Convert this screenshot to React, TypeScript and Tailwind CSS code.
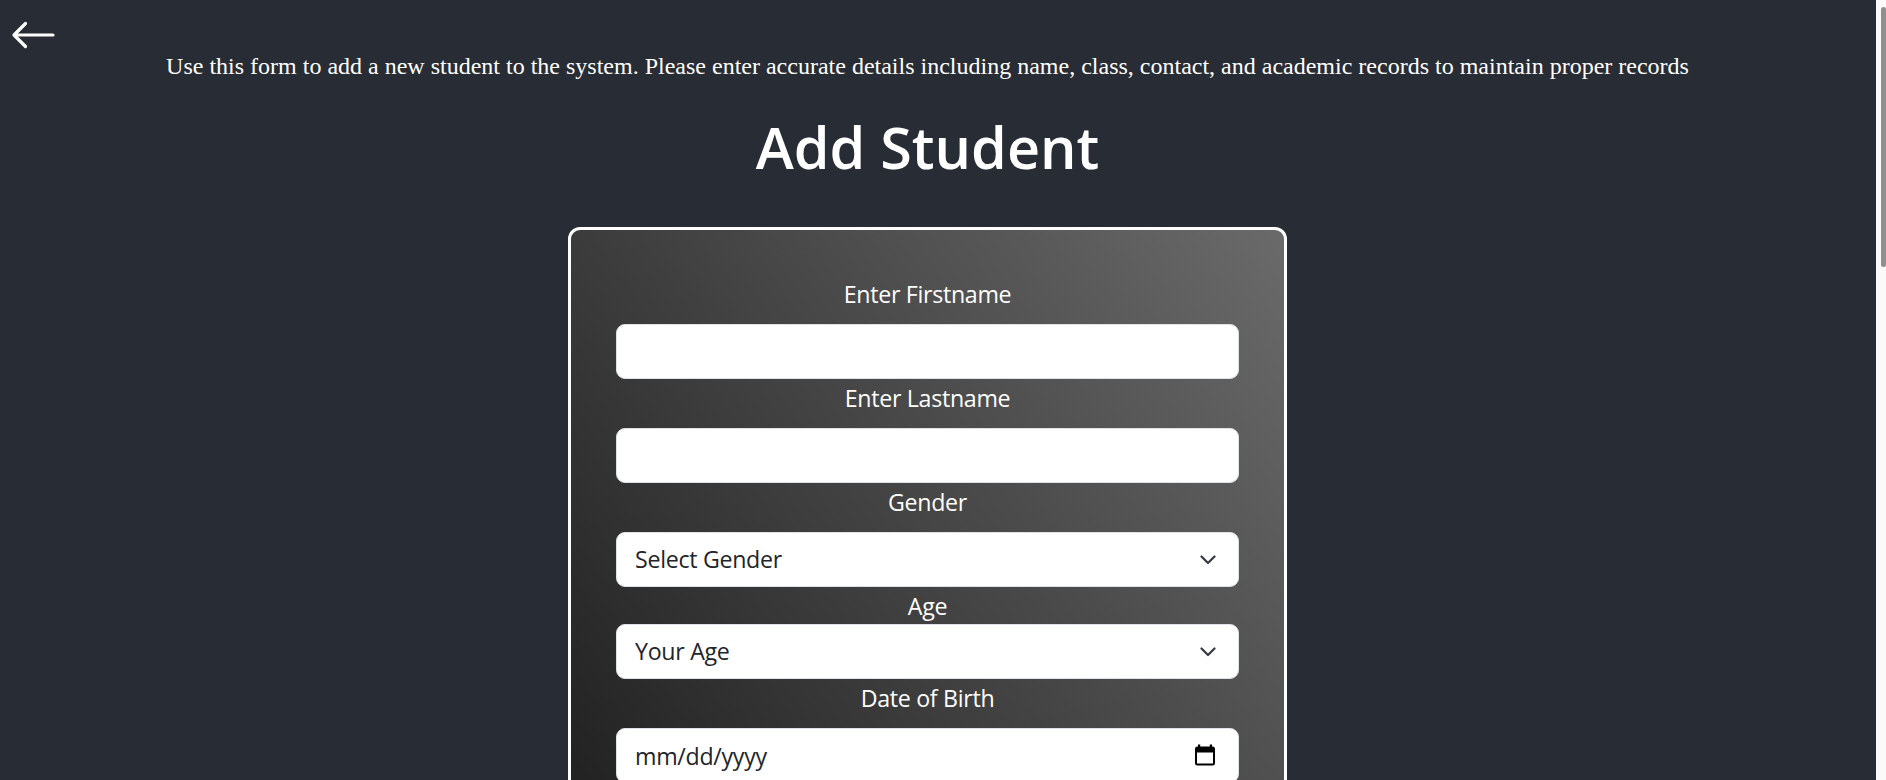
function BackArrow() {
  return (
    <svg width="48" height="48" viewBox="0 0 48 48" fill="none">
      <path
        d="M44 24H5M16.5 12.5 5 24l11.5 11.5"
        stroke="#ffffff"
        strokeWidth="3.2"
        strokeLinecap="round"
        strokeLinejoin="round"
      />
    </svg>
  );
}

function Chevron() {
  return (
    <svg
      className="pointer-events-none absolute right-[23px] top-1/2 -translate-y-1/2"
      width="16"
      height="10"
      viewBox="0 0 16 10"
      fill="none"
    >
      <path d="M1.5 1.5 8 8l6.5-6.5" stroke="#343a40" strokeWidth="2.2" strokeLinecap="round" strokeLinejoin="round" />
    </svg>
  );
}

function CalendarIcon() {
  return (
    <svg
      className="pointer-events-none absolute right-[24px] top-[16px]"
      width="20"
      height="22"
      viewBox="0 0 20 22"
      fill="none"
    >
      <rect x="3" y="0.5" width="2.2" height="4" fill="#000" />
      <rect x="14.8" y="0.5" width="2.2" height="4" fill="#000" />
      <rect x="1" y="3.5" width="18" height="17" rx="1.5" stroke="#000" strokeWidth="2" />
      <rect x="1" y="3.5" width="18" height="5" fill="#000" />
    </svg>
  );
}

const labelCls =
  "block text-center text-white font-['Open_Sans',sans-serif] text-[23.2px] leading-[35px] tracking-[-0.3px]";
const inputCls =
  "block w-full h-[55px] rounded-[9px] border border-[#dee2e6] bg-white px-[18px] font-['Open_Sans',sans-serif] text-[23.2px] tracking-[-0.3px] text-[#212529] outline-none";

export default function App() {
  return (
    <div className="flex h-[780px] w-full overflow-hidden bg-[#282c34]">
      <main className="flex min-w-0 flex-1 flex-col pr-[21px]">
        <div className="h-[53px] shrink-0 pl-[9px] pt-[11px]">
          <button type="button" className="block" aria-label="Back">
            <BackArrow />
          </button>
        </div>
        <p className="shrink-0 text-center font-['Liberation_Serif',serif] text-[24px] leading-[27px] text-white">
          Use this form to add a new student to the system. Please enter accurate details including name, class, contact, and academic records to maintain proper records
        </p>
        <h1 className="mt-[32px] shrink-0 text-center font-['Open_Sans',sans-serif] text-[57.5px] font-semibold leading-[70px] text-white">
          Add Student
        </h1>
        <form className="mx-auto mt-[45px] min-h-[800px] w-[719px] shrink-0 rounded-[12px] border-[3px] border-white bg-[linear-gradient(55deg,#171717,#6a6a6a)] px-[45px] pt-[47px]">
          <div className="flex flex-col gap-[2px]">
            <div>
              <label className={labelCls + " mb-[12px]"}>Enter Firstname</label>
              <input type="text" className={inputCls} />
            </div>
            <div>
              <label className={labelCls + " mb-[12px]"}>Enter Lastname</label>
              <input type="text" className={inputCls} />
            </div>
            <div>
              <label className={labelCls + " mb-[12px]"}>Gender</label>
              <div className="relative">
                <select className={inputCls + " appearance-none"} defaultValue="">
                  <option value="">Select Gender</option>
                  <option value="male">Male</option>
                  <option value="female">Female</option>
                </select>
                <Chevron />
              </div>
            </div>
            <div>
              <label className={labelCls}>Age</label>
              <div className="relative">
                <select className={inputCls + " appearance-none"} defaultValue="">
                  <option value="">Your Age</option>
                  <option value="10">10</option>
                  <option value="11">11</option>
                </select>
                <Chevron />
              </div>
            </div>
            <div>
              <label className={labelCls + " mb-[12px]"}>Date of Birth</label>
              <div className="relative">
                <input
                  type="text"
                  placeholder="mm/dd/yyyy"
                  className={inputCls + " placeholder:text-[#212529]"}
                />
                <CalendarIcon />
              </div>
            </div>
          </div>
        </form>
      </main>
      <div className="w-[10px] shrink-0 bg-[#fafafa]">
        <div className="ml-[5px] mt-[7px] h-[260px] w-[5px] rounded-[3px] bg-[#8f8f8f]" />
      </div>
    </div>
  );
}
